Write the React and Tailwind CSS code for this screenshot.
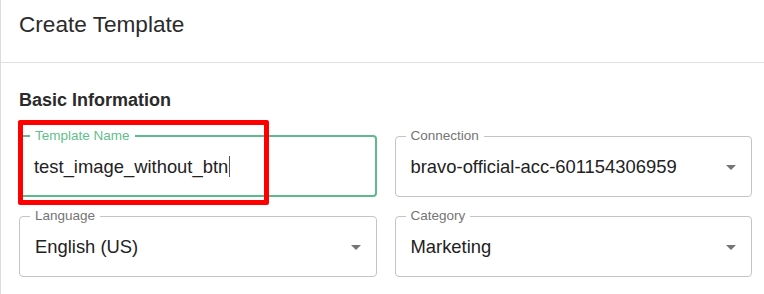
import React from "react";

function Arrow() {
  return (
    <svg width="24" height="24" viewBox="0 0 24 24" className="shrink-0">
      <path d="M7 10l5 5 5-5z" fill="#757575" />
    </svg>
  );
}

function Field({ label, value, select, focused }) {
  return (
    <fieldset
      className={
        "h-[68px] m-0 min-w-0 rounded-[4px] " +
        (focused ? "border-2 border-[#5dba8c] pl-[9px] pr-[8px]" : "border border-[#c4c4c4] pl-[10px] pr-[8px]")
      }
    >
      <legend
        className={
          "px-[5px] text-[13.5px] leading-[14px] " + (focused ? "text-[#5fbf8c]" : "text-[#757575]")
        }
      >
        {label}
      </legend>
      <div className={"h-[47px] flex items-center justify-between " + (focused ? "pl-[4px]" : "pl-[5px]")}>
        <span className="text-[18.4px] leading-[22px] text-[#222] flex items-center whitespace-nowrap">
          {value}
          {focused && <span className="inline-block w-px h-[21px] bg-[#555] ml-[1px]" />}
        </span>
        {select && <Arrow />}
      </div>
    </fieldset>
  );
}

export default function App() {
  return (
    <div
      className="relative w-[764px] h-[294px] bg-white border-l border-[#dcdcdc] overflow-hidden"
      style={{ fontFamily: '"Liberation Sans", Arial, sans-serif' }}
    >
      <div className="h-[63px] border-b border-[#e0e0e0] pl-[18px] pt-[12px]">
        <h1 className="text-[22.6px] leading-[26px] text-[#2b2b2b] font-normal">Create Template</h1>
      </div>
      <div className="pl-[18px] pr-[12px]">
        <h2 className="pt-[26px] text-[18px] leading-[22px] font-bold text-[#2b2b2b]">Basic Information</h2>
        <div className="mt-[18px] grid grid-cols-2 gap-x-[18px] gap-y-[12px]">
          <Field label="Template Name" value="test_image_without_btn" focused />
          <Field label="Connection" value="bravo-official-acc-601154306959" select />
          <Field label="Language" value="English (US)" select />
          <Field label="Category" value="Marketing" select />
        </div>
      </div>
      <div className="absolute left-[17px] top-[120px] w-[251px] h-[85px] border-[5px] border-[#ff0000] rounded-[2px]" />
    </div>
  );
}
